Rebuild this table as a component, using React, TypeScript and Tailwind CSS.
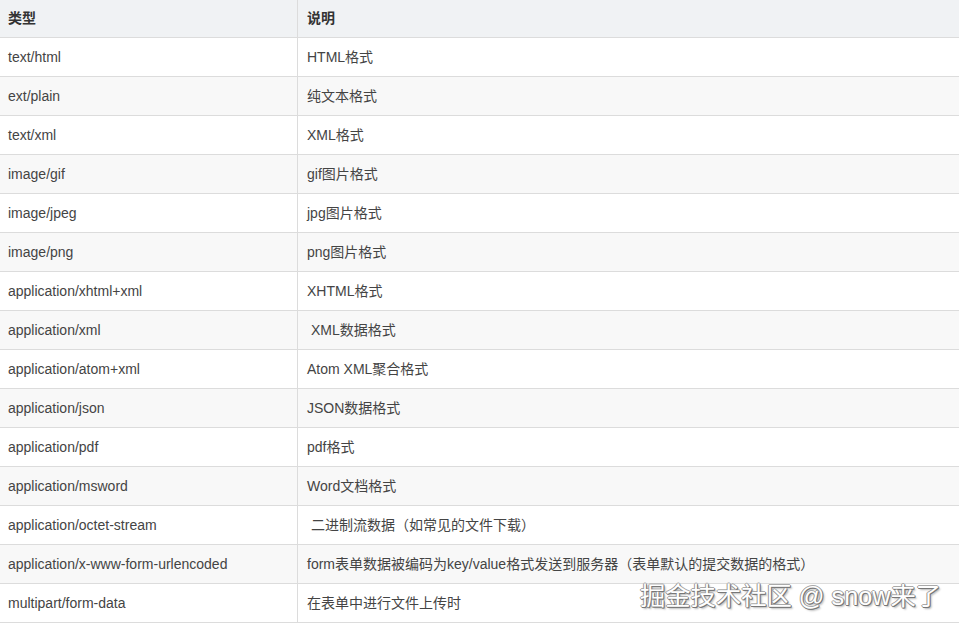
import React from "react";

const rows: [string, string][] = [
  ["text/html", "HTML格式"],
  ["ext/plain", "纯文本格式"],
  ["text/xml", "XML格式"],
  ["image/gif", "gif图片格式"],
  ["image/jpeg", "jpg图片格式"],
  ["image/png", "png图片格式"],
  ["application/xhtml+xml", "XHTML格式"],
  ["application/xml", "\u00a0XML数据格式"],
  ["application/atom+xml", "Atom XML聚合格式"],
  ["application/json", "JSON数据格式"],
  ["application/pdf", "pdf格式"],
  ["application/msword", "Word文档格式"],
  ["application/octet-stream", "\u00a0二进制流数据（如常见的文件下载）"],
  ["application/x-www-form-urlencoded", "form表单数据被编码为key/value格式发送到服务器（表单默认的提交数据的格式）"],
  ["multipart/form-data", "在表单中进行文件上传时"],
];

export default function App() {
  return (
    <div
      className="relative w-[959px] h-[628px] bg-white overflow-hidden text-[14px] text-[#444]"
      style={{ fontFamily: '"Liberation Sans", Arial, "Noto Sans CJK SC", sans-serif' }}
    >
      <div className="flex h-[38px] bg-[#f0f2f4] border-b border-[#dcdcdc] font-bold text-[#333]">
        <div className="w-[298px] border-r border-[#dcdcdc] pl-[8px] flex items-center">类型</div>
        <div className="flex-1 pl-[9px] flex items-center">说明</div>
      </div>
      {rows.map(([a, b], i) => (
        <div
          key={i}
          className={`flex h-[39px] border-b border-[#dcdcdc] ${i % 2 === 1 ? "bg-[#f8f8f8]" : "bg-white"}`}
        >
          <div className="w-[298px] border-r border-[#dcdcdc] pl-[8px] flex items-center">{a}</div>
          <div className="flex-1 pl-[9px] flex items-center whitespace-nowrap">{b}</div>
        </div>
      ))}
      <div
        className="absolute left-[640px] top-[578px] text-[25.3px] text-white whitespace-nowrap"
        style={{
          textShadow:
            "1px 1px 0 #777, -1px 0 0 #999, 0 -1px 0 #aaa, 1px 0 0 #888, 0 1px 0 #777, 2px 2px 2px rgba(0,0,0,0.3)",
        }}
      >
        掘金技术社区 @ snow来了
      </div>
    </div>
  );
}
